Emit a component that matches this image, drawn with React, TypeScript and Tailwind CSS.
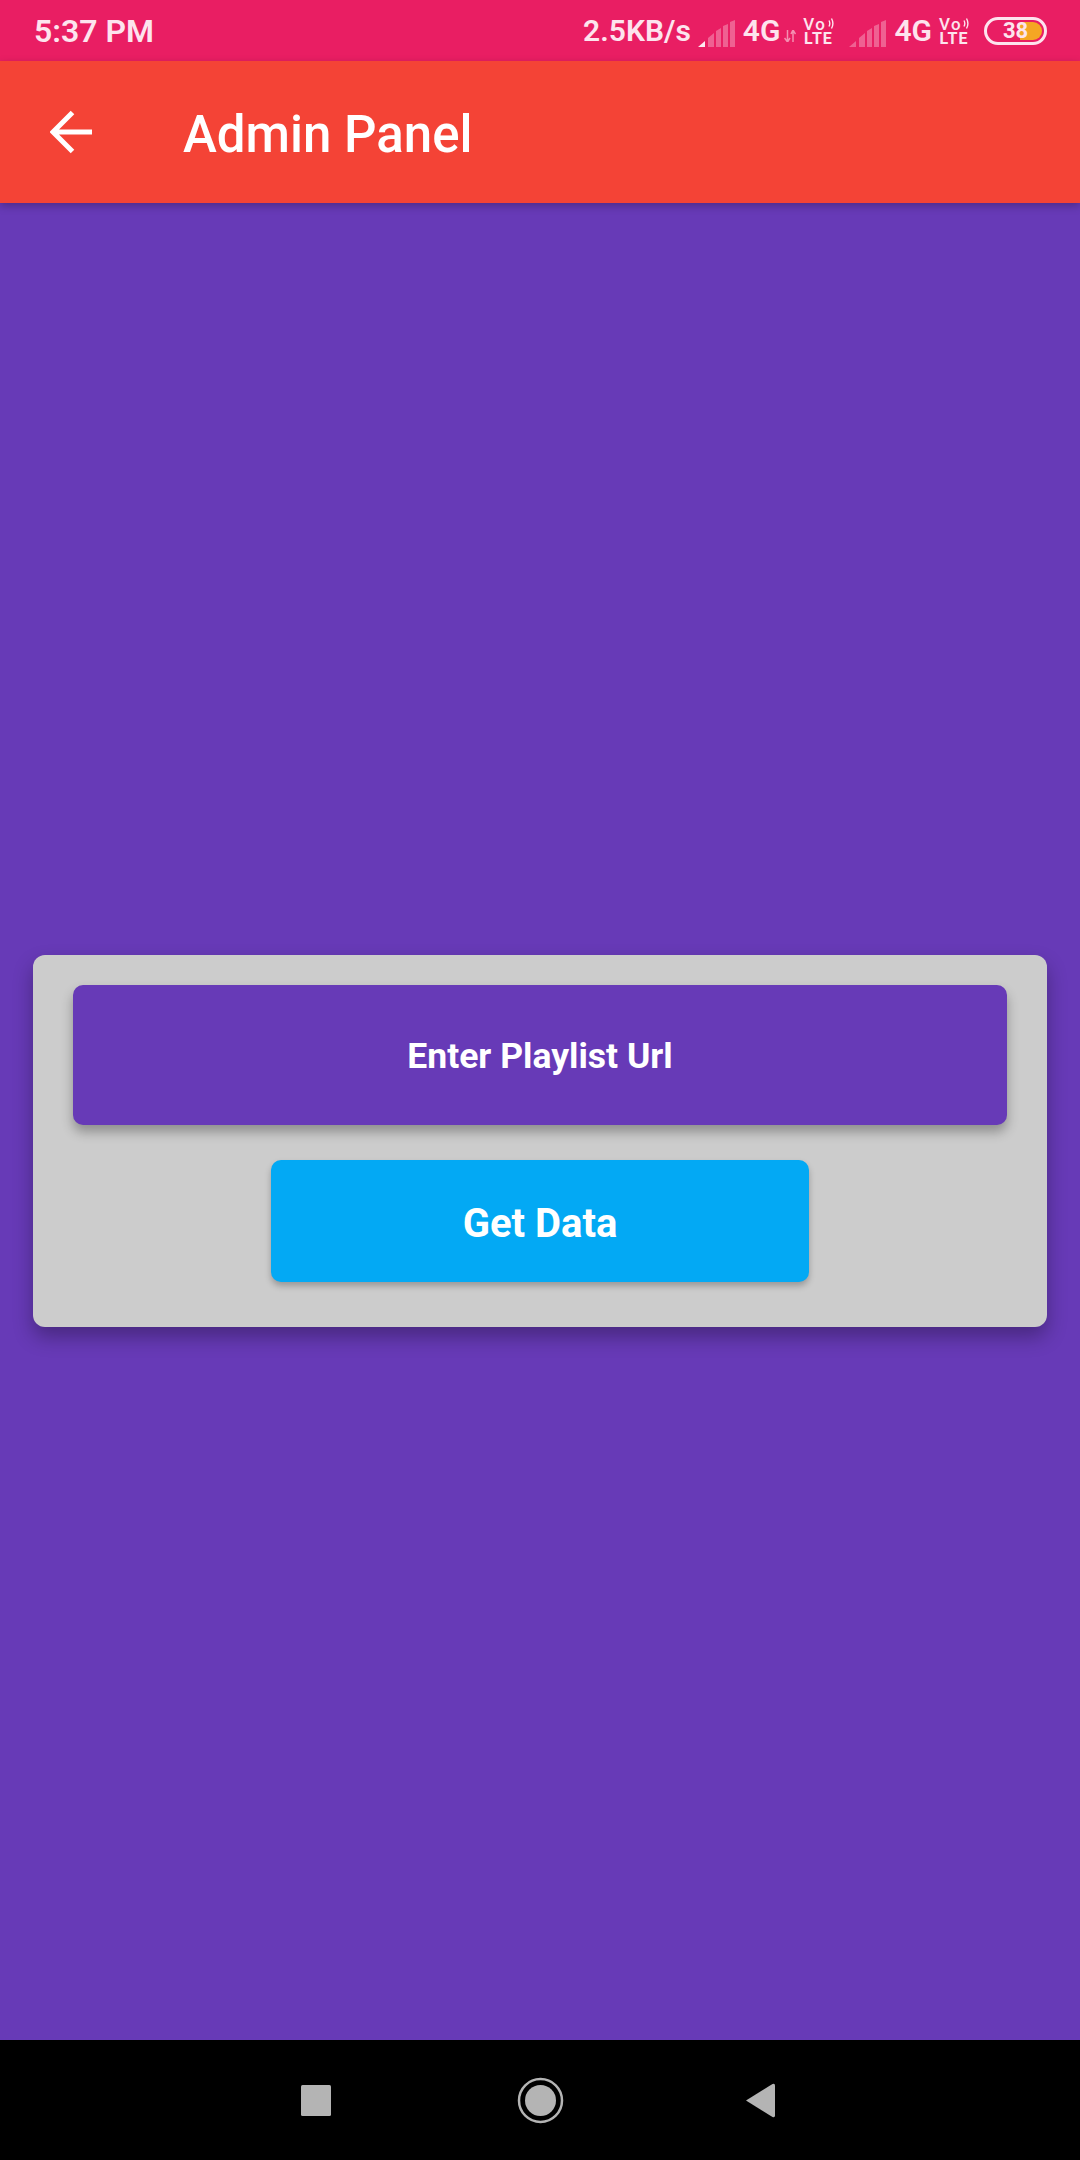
import React from "react";

const SignalBars = ({ filled = 0 }: { filled?: number }) => {
  const bars = [
    "M0 27 L7 21 L7 27 Z",
    "M10 27 L10 18 L16 13 L16 27 Z",
    "M18 27 L18 11 L23 8 L23 27 Z",
    "M25 27 L25 6 L30 4 L30 27 Z",
    "M32 27 L32 2 L37 0 L37 27 Z",
  ];
  return (
    <svg width="37" height="27" viewBox="0 0 37 27">
      {bars.map((d, i) => (
        <path key={i} d={d} fill="#ffffff" fillOpacity={i < filled ? 0.9 : 0.3} />
      ))}
    </svg>
  );
};

const Volte = () => (
  <div className="flex flex-col items-center w-[32px] h-[29px] text-[#fde4ee] leading-none">
    <div className="flex items-center h-[14px]">
      <span className="text-[17px] leading-[14px] font-medium tracking-[1.5px]">Vo</span>
      <svg width="6" height="13" viewBox="0 0 6 13" className="ml-[1px]">
        <path d="M1 3.5 Q2.6 6.5 1 9.5 M3.5 1.5 Q6.3 6.5 3.5 11.5" stroke="#fde4ee" strokeWidth="1.4" fill="none" />
      </svg>
    </div>
    <span className="mt-[1px] text-[16px] leading-[14px] font-bold tracking-[1px]">LTE</span>
  </div>
);

const StatusBar = () => (
  <div className="h-[61px] pt-[1px] bg-[#e91e63] flex items-center justify-between pl-[34px] pr-[33px] text-[#fde4ee] font-semibold">
    <span className="text-[32px] leading-none">5:37 PM</span>
    <div className="flex items-center">
      <span className="text-[30px] leading-none">2.5KB/s</span>
      <div className="ml-[7px] mt-[4px] flex"><SignalBars filled={1} /></div>
      <span className="ml-[8px] text-[30px] leading-none">4G</span>
      <svg width="12" height="12" viewBox="0 0 12 12" className="ml-[4px] mt-[10px]">
        <path d="M3.5 12 V0 M0.5 8 L3.5 12 L6 8 M9 0 V12 M7 4 L9 0 L11.5 4" stroke="#ffffff" strokeOpacity="0.5" strokeWidth="1.5" fill="none" />
      </svg>
      <div className="ml-[6px]"><Volte /></div>
      <div className="ml-[15px] mt-[4px] flex"><SignalBars /></div>
      <span className="ml-[8px] text-[30px] leading-none">4G</span>
      <div className="ml-[6px]"><Volte /></div>
      <div className="relative ml-[14px] w-[63px] h-[28px] rounded-full border-[3px] border-[#fde4ee] flex items-center justify-center overflow-hidden">
        <div className="absolute right-[2px] top-[2px] bottom-[2px] w-[22px] bg-[#f5a623] rounded-r-full" />
        <span className="relative text-[22px] leading-none font-bold text-[#fde4ee]">38</span>
      </div>
    </div>
  </div>
);

const AppBar = () => (
  <div className="relative z-10 h-[142px] bg-[#f44336] flex items-center shadow-[0_3px_8px_rgba(0,0,0,0.25)]">
    <svg width="44" height="44" viewBox="0 0 44 44" className="ml-[50px]">
      <path d="M42 22 H3 M22.5 2.5 L3 22 L22.5 41.5" stroke="#ffffff" strokeWidth="5" fill="none" />
    </svg>
    <span className="ml-[89px] mt-[4px] text-[51px] leading-none font-medium text-white">Admin Panel</span>
  </div>
);

const NavBar = () => (
  <div className="h-[120px] bg-black flex items-center justify-center pr-[5px] text-[#b4b4b4]">
    <svg width="30" height="31" viewBox="0 0 30 31">
      <rect width="30" height="31" rx="1.5" fill="currentColor" />
    </svg>
    <svg width="47" height="47" viewBox="0 0 47 47" className="ml-[186px]">
      <circle cx="23.5" cy="23.5" r="21.5" stroke="currentColor" strokeWidth="2.5" fill="none" />
      <circle cx="23.5" cy="23.5" r="15.5" fill="currentColor" />
    </svg>
    <svg width="29" height="35" viewBox="0 0 29 35" className="ml-[182px]">
      <path d="M0 17.5 L26.5 1 Q29 0 29 2.5 V32.5 Q29 35 26.5 34 Z" fill="currentColor" />
    </svg>
  </div>
);

export default function App() {
  return (
    <div className="w-[1080px] h-[2160px] flex flex-col bg-[#673ab7] font-['Roboto',sans-serif]">
      <StatusBar />
      <AppBar />
      <main className="flex-1 flex flex-col justify-center px-[33px] pt-[38px]">
        <div className="h-[372px] bg-[#cccccc] rounded-[12px] px-[40px] pt-[30px] flex flex-col items-center shadow-[0_10px_20px_rgba(0,0,0,0.3)]">
          <div className="w-full h-[140px] pt-[4px] bg-[#673ab7] rounded-[10px] flex items-center justify-center text-white text-[35.5px] font-bold shadow-[0_7px_12px_rgba(0,0,0,0.3)]">
            Enter Playlist Url
          </div>
          <button className="mt-[35px] w-[538px] h-[122px] pt-[6px] bg-[#03a9f4] rounded-[10px] flex items-center justify-center text-white text-[40px] font-bold shadow-[0_4px_6px_rgba(0,0,0,0.25)]">
            Get Data
          </button>
        </div>
      </main>
      <NavBar />
    </div>
  );
}
